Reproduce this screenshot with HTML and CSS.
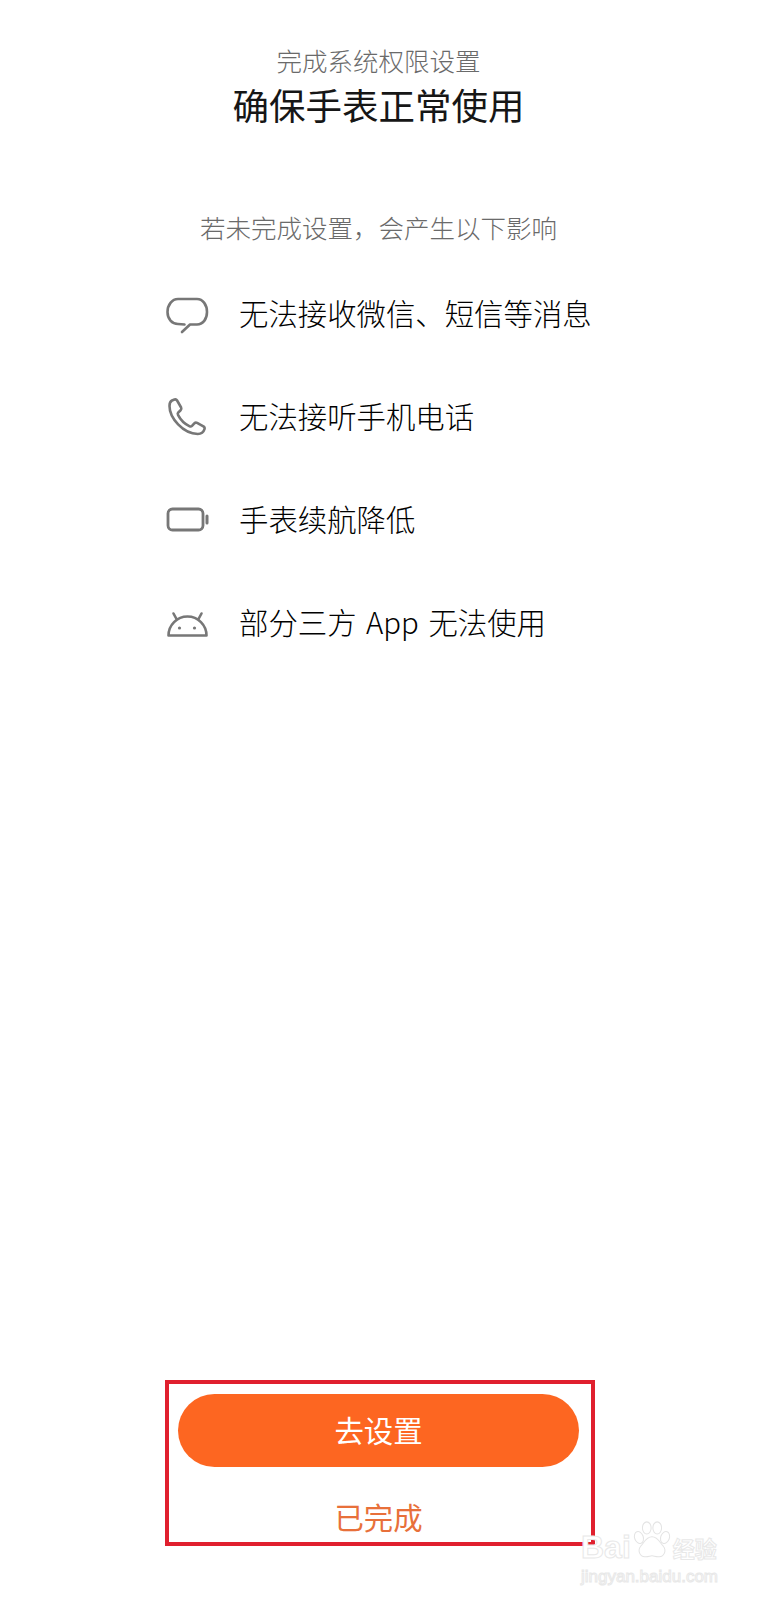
FILE: index.html
```html
<!DOCTYPE html>
<html lang="zh-CN">
<head>
<meta charset="utf-8">
<title>完成系统权限设置</title>
<link rel="stylesheet" href="styles.css">
</head>
<body>
<main class="page">
  <header class="head">
    <p class="eyebrow">完成系统权限设置</p>
    <h1 class="title">确保手表正常使用</h1>
  </header>
  <p class="sub">若未完成设置，会产生以下影响</p>
  <ul class="list">
    <li class="item">
      <svg class="icon" viewBox="0 0 44 40" fill="none" stroke="#777" stroke-width="2.6" stroke-linecap="round" stroke-linejoin="round"><path d="M16 38 24 30.500H31C37 30.500 41 25 41 18 41 11 37 5 31 5H12C6 5 1.500 11 1.500 18 1.500 25 6 30 12 30L18.500 30.500"/></svg>
      <span>无法接收微信、短信等消息</span>
    </li>
    <li class="item">
      <svg class="icon" viewBox="0 0 44 40" fill="none" stroke="#777" stroke-width="2.6" stroke-linecap="round" stroke-linejoin="round"><path d="M6 3.500 8.500 2.500c1-.4 2 0 2.600 1l4 7c.5 1 .3 2-.5 2.800l-2.300 2.200c-.7.700-.8 1.400-.3 2.300 2.500 5 6.500 9 11.700 11.500.9.400 1.600.3 2.300-.4l2.300-2.500c.8-.8 1.800-1 2.800-.5l6.300 3.500c1.100.7 1.500 1.600 1.100 2.800-.9 2.800-3.500 4.800-6.700 4.800C17 36.500 3.500 21 3.500 9c0-2.300 .5-4.500 2.500-5.500Z"/></svg>
      <span>无法接听手机电话</span>
    </li>
    <li class="item">
      <svg class="icon" viewBox="0 0 44 40" fill="none" stroke="#777" stroke-linecap="round"><rect x="2" y="9" width="35" height="21" rx="4.500" stroke-width="2.800"/><path d="M41 16v7" stroke-width="3"/></svg>
      <span>手表续航降低</span>
    </li>
    <li class="item">
      <svg class="icon" viewBox="0 0 44 40" fill="none" stroke="#777" stroke-width="2.600" stroke-linecap="round" stroke-linejoin="round"><path d="M2.500 32.500h38C40.500 22 32 13.500 21.500 13.500S2.500 22 2.500 32.500Z"/><path d="M10.500 16 7.500 10.500M32.500 16l3-5.500"/><circle cx="13.500" cy="25" r="1.600" fill="#777" stroke="none"/><circle cx="28.500" cy="25" r="1.600" fill="#777" stroke="none"/></svg>
      <span>部分三方 App 无法使用</span>
    </li>
  </ul>
  <footer class="actions">
    <button class="primary" type="button">去设置</button>
    <button class="secondary" type="button">已完成</button>
  </footer>
</main>
<div class="watermark" aria-hidden="true">
  <div class="wm-top">
    <span>Bai</span>
    <svg class="paw" viewBox="0 0 46 46" fill="#fff" stroke="#e4e4e4" stroke-width="1.200"><ellipse cx="8" cy="19" rx="5" ry="7" transform="rotate(-20 8 19)"/><ellipse cx="17" cy="8" rx="5" ry="7"/><ellipse cx="29" cy="8" rx="5" ry="7"/><ellipse cx="38" cy="19" rx="5" ry="7" transform="rotate(20 38 19)"/><path d="M23 18c-7 0-9 7-13 11-4 5-1 13 6 12 3 0 5-1 7-1s4 1 7 1c7 1 10-7 6-12-4-4-6-11-13-11Z"/></svg>
    <span class="wm-cn">经验</span>
  </div>
  <div class="wm-url">jingyan.baidu.com</div>
</div>
</body>
</html>
```
FILE: styles.css
```css
* { box-sizing: border-box; }
html, body { margin: 0; background: #fff; }
body {
  position: relative;
  font-family: "Noto Sans CJK SC", "Liberation Sans", sans-serif;
}
.page {
  height: 1600px;
  display: flex;
  flex-direction: column;
  align-items: center;
  padding-top: 42px;
  overflow: hidden;
}
.head { text-align: center; }
.eyebrow {
  margin: 0;
  font-size: 25.500px;
  line-height: 36px;
  font-weight: 300;
  color: #6a6a6a;
}
.title {
  margin: 3px 0 0;
  font-size: 36.500px;
  line-height: 48px;
  font-weight: 400;
  color: #161616;
}
.sub {
  margin: 80px 0 0;
  font-size: 25.500px;
  line-height: 36px;
  font-weight: 300;
  color: #6a6a6a;
}
.list {
  list-style: none;
  margin: 15px 0 0;
  padding: 0 0 0 166px;
  align-self: stretch;
}
.item {
  display: flex;
  align-items: center;
  gap: 29px;
  height: 103px;
  font-size: 29.400px;
  font-weight: 300;
  word-spacing: 3px;
  color: #000;
}
.icon { width: 44px; height: 40px; flex: none; margin-top: 4px; }
.actions {
  margin-top: auto;
  margin-bottom: 54px;
  align-self: flex-start;
  margin-left: 165px;
  width: 430px;
  height: 166px;
  border: 4px solid #e0202e;
  padding: 10px 12px 0 9px;
  display: flex;
  flex-direction: column;
  align-items: center;
}
.primary, .secondary {
  border: 0;
  font-family: inherit;
  font-size: 29.400px;
  font-weight: 400;
  padding: 0;
}
.primary {
  width: 100%;
  height: 73px;
  flex: none;
  border-radius: 37px;
  background: #fd6621;
  color: #fff;
  padding-bottom: 4px;
}
.secondary {
  background: none;
  color: #e8703a;
  height: 40px;
  line-height: 40px;
  margin-top: 29px;
}
.watermark {
  position: absolute;
  left: 581px;
  top: 1518px;
  width: 160px;
  color: #fff;
  -webkit-text-stroke: 1px #e8e8e8;
  font-family: "Liberation Sans", sans-serif;
}
.wm-top { display: flex; align-items: flex-end; height: 44px; font-size: 32px; line-height: 30px; font-weight: 700; }
.paw { width: 40px; height: 42px; flex: none; margin: 0 1px; }
.wm-cn { font-family: "Noto Sans CJK SC", sans-serif; font-size: 22px; line-height: 30px; }
.wm-url { font-size: 17px; line-height: 22px; margin-top: 4px; white-space: nowrap; }
```
